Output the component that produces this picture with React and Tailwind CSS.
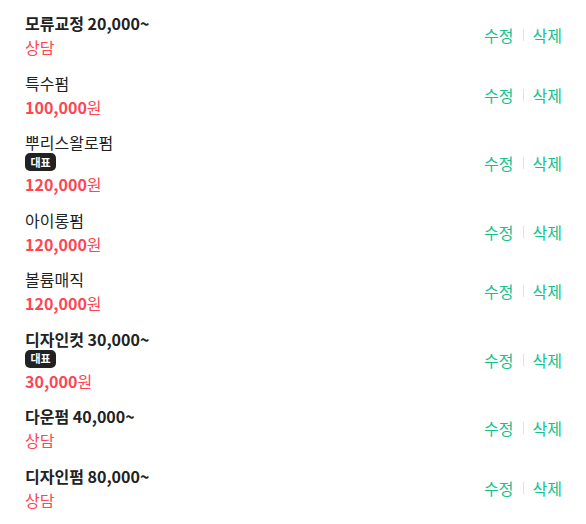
import React from 'react'

const items = [
  { name: '모류교정', from: '20,000~', price: null },
  { name: '특수펌', price: '100,000' },
  { name: '뿌리스왈로펌', badge: true, price: '120,000' },
  { name: '아이롱펌', price: '120,000' },
  { name: '볼륨매직', price: '120,000' },
  { name: '디자인컷', from: '30,000~', badge: true, price: '30,000' },
  { name: '다운펌', from: '40,000~', price: null },
  { name: '디자인펌', from: '80,000~', price: null },
]

function Row({ item }) {
  return (
    <li className="flex items-center justify-between">
      <div className="flex flex-col">
        <div className="text-[16px] leading-[24px] text-[#222]">
          <span className={item.from ? 'font-semibold' : ''}>{item.name}</span>
          {item.from && <span className="font-bold"> {item.from}</span>}
        </div>
        {item.badge && (
          <div className="h-[19px] -mt-[1px] flex items-start">
            <span className="inline-flex items-center justify-center h-[18px] w-[31px] rounded-[5px] bg-[#222] text-white text-[11px] font-bold leading-none">
              대표
            </span>
          </div>
        )}
        <div className="text-[16px] leading-[24px] text-[#ff4552]">
          {item.price ? (
            <>
              <span className="font-bold">{item.price}</span>
              <span>원</span>
            </>
          ) : (
            <span>상담</span>
          )}
        </div>
      </div>
      <div className="flex items-center text-[16px] text-[#12c28d]">
        <button className="leading-[24px]">수정</button>
        <span className="mx-[9px] h-[12px] w-px bg-[#e2e2e2]" />
        <button className="leading-[24px]">삭제</button>
      </div>
    </li>
  )
}

export default function App() {
  return (
    <div
      className="w-[586px] min-h-[524px] bg-white"
      style={{ fontFamily: '"Noto Sans CJK KR", "Noto Sans", sans-serif' }}
    >
      <ul className="flex flex-col gap-[11.5px] pt-[11px] pl-[25px] pr-[24px]">
        {items.map((item) => (
          <Row key={item.name} item={item} />
        ))}
      </ul>
    </div>
  )
}
